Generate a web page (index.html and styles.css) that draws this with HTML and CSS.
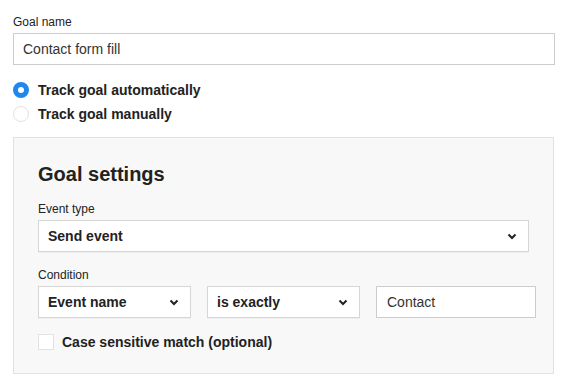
FILE: index.html
```html
<!doctype html>
<html lang="en">
<head>
    <meta charset="UTF-8">
    <meta name="viewport" content="width=device-width, initial-scale=1.0">
    <title>Goal</title>
    <link rel="stylesheet" href="styles.css">
</head>
<body>
    <div id="wrapper">
        <div class="field">
            <label class="field_label" for="goal_name">Goal name</label>
            <input type="text" id="goal_name" class="text_input" value="Contact form fill">
        </div>

        <div class="radio_group">
            <label class="radio_row">
                <span class="radio checked"></span>
                <span>Track goal automatically</span>
            </label>
            <label class="radio_row">
                <span class="radio"></span>
                <span>Track goal manually</span>
            </label>
        </div>

        <div id="settings">
            <h2>Goal settings</h2>

            <div class="field">
                <span class="field_label">Event type</span>
                <div class="select select_wide">
                    <span>Send event</span>
                    <svg class="chevron" width="10" height="7" viewBox="0 0 10 7"><path d="M1.5 1.5 L5 5 L8.5 1.5" fill="none" stroke="#222" stroke-width="2"/></svg>
                </div>
            </div>

            <div class="field field_condition">
                <span class="field_label">Condition</span>
                <div class="condition_row">
                    <div class="select select_small">
                        <span>Event name</span>
                        <svg class="chevron" width="10" height="7" viewBox="0 0 10 7"><path d="M1.5 1.5 L5 5 L8.5 1.5" fill="none" stroke="#222" stroke-width="2"/></svg>
                    </div>
                    <div class="select select_small">
                        <span>is exactly</span>
                        <svg class="chevron" width="10" height="7" viewBox="0 0 10 7"><path d="M1.5 1.5 L5 5 L8.5 1.5" fill="none" stroke="#222" stroke-width="2"/></svg>
                    </div>
                    <input type="text" class="text_input condition_value" value="Contact">
                </div>
            </div>

            <label class="check_row">
                <span class="checkbox"></span>
                <span>Case sensitive match (optional)</span>
            </label>
        </div>
    </div>
</body>
</html>
```

FILE: styles.css
```css
body {
    font-family: 'Liberation Sans', Arial, sans-serif;
    margin: 0;
    padding: 0;
    background: #fff;
    color: #222;
}

#wrapper {
    width: 542px;
    margin-left: 13px;
    padding-top: 14px;
    display: flex;
    flex-direction: column;
}

.field {
    display: flex;
    flex-direction: column;
    gap: 3px;
}

.field_label {
    font-size: 12px;
    line-height: 16px;
    color: #222;
}

.text_input {
    box-sizing: border-box;
    height: 32px;
    width: 100%;
    margin: 0;
    padding: 0 9px;
    font-family: inherit;
    font-size: 14px;
    color: #333;
    background: #fff;
    border: 1px solid #ccc;
    border-radius: 0;
    outline: none;
}

.radio_group {
    display: flex;
    flex-direction: column;
    margin-top: 13px;
}

.radio_row {
    display: flex;
    align-items: center;
    gap: 9px;
    height: 24px;
    font-size: 14px;
    font-weight: 700;
    color: #222;
}

.radio {
    box-sizing: border-box;
    width: 16px;
    height: 16px;
    border-radius: 50%;
    border: 1px solid #e2e2e2;
    background: #fff;
}

.radio.checked {
    border: 5px solid #1f87ee;
}

#settings {
    box-sizing: border-box;
    margin-top: 11px;
    width: 541px;
    padding: 24px 24px 23px;
    background: #f8f8f8;
    border: 1px solid #e1e1e1;
    display: flex;
    flex-direction: column;
}

h2 {
    margin: 0 0 15px;
    font-size: 20px;
    line-height: 24px;
    font-weight: 700;
    color: #222;
}

.select {
    box-sizing: border-box;
    flex-shrink: 0;
    height: 32px;
    display: flex;
    align-items: center;
    justify-content: space-between;
    padding: 0 11px 0 9px;
    font-size: 14px;
    font-weight: 700;
    color: #222;
    background: #fff;
    border: 1px solid #d6d6d6;
    box-shadow: 0 1px 0 rgba(0, 0, 0, 0.04);
}

.select_wide {
    width: 491px;
}

.select_small {
    width: 153px;
}

.field_condition {
    margin-top: 15px;
}

.condition_row {
    display: flex;
    gap: 16px;
}

.condition_value {
    flex-shrink: 0;
    width: 160px;
    padding: 0 10px;
}

.check_row {
    display: flex;
    align-items: center;
    gap: 8px;
    margin-top: 16px;
    height: 16px;
    font-size: 14px;
    font-weight: 700;
    color: #222;
}

.checkbox {
    box-sizing: border-box;
    width: 16px;
    height: 16px;
    background: #fff;
    border: 1px solid #e2e2e2;
}
```
